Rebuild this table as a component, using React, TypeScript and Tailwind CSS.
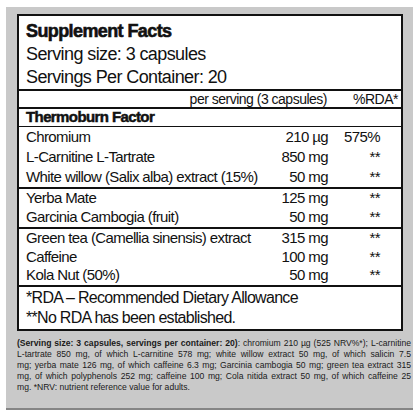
import React from "react";

const sans = "font-['Liberation_Sans',Arial,sans-serif]";

type Row = { name: string; amt: string; rda: string };

const g1: Row[] = [
  { name: "Chromium", amt: "210 µg", rda: "575%" },
  { name: "L-Carnitine L-Tartrate", amt: "850 mg", rda: "**" },
  { name: "White willow (Salix alba) extract (15%)", amt: "50 mg", rda: "**" },
];
const g2: Row[] = [
  { name: "Yerba Mate", amt: "125 mg", rda: "**" },
  { name: "Garcinia Cambogia (fruit)", amt: "50 mg", rda: "**" },
];
const g3: Row[] = [
  { name: "Green tea (Camellia sinensis) extract", amt: "315 mg", rda: "**" },
  { name: "Caffeine", amt: "100 mg", rda: "**" },
  { name: "Kola Nut (50%)", amt: "50 mg", rda: "**" },
];

function Rows({ rows, h }: { rows: Row[]; h: string }) {
  return (
    <div className="flex flex-col">
      {rows.map((r) => (
        <div
          key={r.name}
          className={`flex items-center pl-[7px] pr-[21px] text-[15px] tracking-[-0.6px] whitespace-nowrap ${h}`}
        >
          <span className="flex-1">{r.name}</span>
          <span className="w-[70px] text-right">{r.amt}</span>
          <span className="w-[52px] text-right">{r.rda}</span>
        </div>
      ))}
    </div>
  );
}

const foot: React.ReactNode[] = [
  <>
    <b>(Serving size: 3 capsules, servings per container: 20)</b>: chromium 210 µg (525 NRV%*); L-carnitine
  </>,
  <>L-tartrate 850 mg, of which L-carnitine 578 mg; white willow extract 50 mg, of which salicin 7.5</>,
  <>mg; yerba mate 126 mg, of which caffeine 6.3 mg; Garcinia cambogia 50 mg; green tea extract 315</>,
  <>mg, of which polyphenols 252 mg; caffeine 100 mg; Cola nitida extract 50 mg, of which caffeine 25</>,
];

export default function App() {
  return (
    <div className="w-[416px] h-[416px] bg-white overflow-hidden pt-[7px] pl-[6px]">
      <div className="w-[407px] h-[403px] bg-[#c9c9c9] border-b-2 border-[#858585] pl-[11px] pt-[7px]">
        <div className={`w-[386px] bg-white border-2 border-[#111] text-[#111] ${sans}`}>
          <div className="pl-[7px] pt-[4px] leading-[23px] text-[18px] tracking-[-0.6px]">
            <div className="font-bold [-webkit-text-stroke:0.6px_#111]">Supplement Facts</div>
            <div>Serving size: 3 capsules</div>
            <div>Servings Per Container: 20</div>
          </div>
          <div className="border-t-2 border-[#111] h-[18px] flex items-center justify-end pr-[3px] text-[14px] tracking-[-0.5px]">
            <span>per serving (3 capsules)</span>
            <span className="w-[71px] text-right">%RDA*</span>
          </div>
          <div className="border-t-2 border-[#111] h-[19px] flex items-center pl-[7px] text-[15px] tracking-[-0.6px] font-bold [-webkit-text-stroke:0.5px_#111]">
            Thermoburn Factor
          </div>
          <div className="border-t border-[#111]">
            <Rows rows={g1} h="h-[20px]" />
          </div>
          <div className="border-t-2 border-[#111]">
            <Rows rows={g2} h="h-[19px]" />
          </div>
          <div className="border-t-2 border-[#111]">
            <Rows rows={g3} h="h-[18.5px]" />
          </div>
          <div className="border-t-2 border-[#111] pl-[7px] pt-[1px] leading-[20.5px] text-[16px] tracking-[-0.7px]">
            <div>*RDA – Recommended Dietary Allowance</div>
            <div>**No RDA has been established.</div>
          </div>
        </div>
        <div className={`w-[394px] mt-[7px] text-[8.6px] leading-[11px] text-[#1a1a1a] ${sans}`}>
          {foot.map((f, i) => (
            <div key={i} className="text-justify [text-align-last:justify] whitespace-nowrap">
              {f}
            </div>
          ))}
          <div>mg. *NRV: nutrient reference value for adults.</div>
        </div>
      </div>
    </div>
  );
}
